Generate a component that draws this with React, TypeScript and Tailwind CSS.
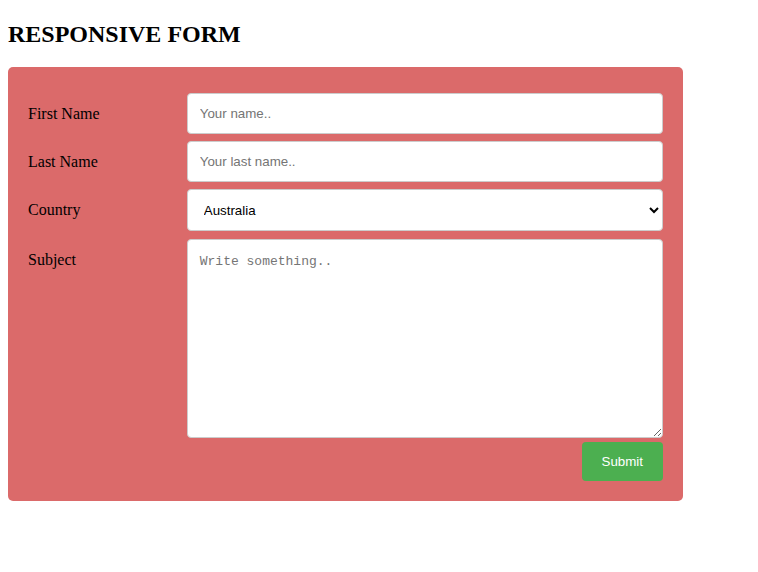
function Row({ label, children }: { label: string; children: React.ReactNode }) {
  return (
    <div className="flex">
      <div className="w-1/4 mt-[6px]">
        <label className="inline-block py-3 pr-3 text-[16px] leading-[18px]">{label}</label>
      </div>
      <div className="w-3/4 mt-[6px]">{children}</div>
    </div>
  )
}

export default function App() {
  const field =
    "block w-full px-3 border border-[#ccc] rounded bg-white text-[13.33px] font-['Liberation_Sans',Arial,sans-serif] text-black placeholder:text-[#757575] outline-none"

  return (
    <div className="px-2 pt-[20px] pb-8 bg-white min-h-[572px] font-['Liberation_Serif','Times_New_Roman',serif] text-black">
      <h2 className="text-[24px] font-bold leading-[28px] mb-[19px]">RESPONSIVE FORM</h2>

      <div className="w-[675px] rounded-[5px] bg-[#db6a6a] p-5">
        <form>
          <Row label="First Name">
            <input type="text" placeholder="Your name.." className={field + ' h-[41px]'} />
          </Row>
          <Row label="Last Name">
            <input type="text" placeholder="Your last name.." className={field + ' h-[41px]'} />
          </Row>
          <Row label="Country">
            <select className={field + ' h-[42px] mb-[2px]'} defaultValue="australia">
              <option value="australia">Australia</option>
              <option value="canada">Canada</option>
              <option value="usa">USA</option>
            </select>
          </Row>
          <Row label="Subject">
            <textarea
              placeholder="Write something.."
              className="block w-full h-[199px] p-3 border border-[#ccc] rounded bg-white resize-y text-[13px] font-['Liberation_Mono','Courier_New',monospace] placeholder:text-[#757575] outline-none"
            />
          </Row>
          <div className="flex justify-end mt-1">
            <button
              type="submit"
              className="h-[39px] px-5 rounded bg-[#4caf50] text-white text-[13.33px] font-['Liberation_Sans',Arial,sans-serif]"
            >
              Submit
            </button>
          </div>
        </form>
      </div>
    </div>
  )
}
